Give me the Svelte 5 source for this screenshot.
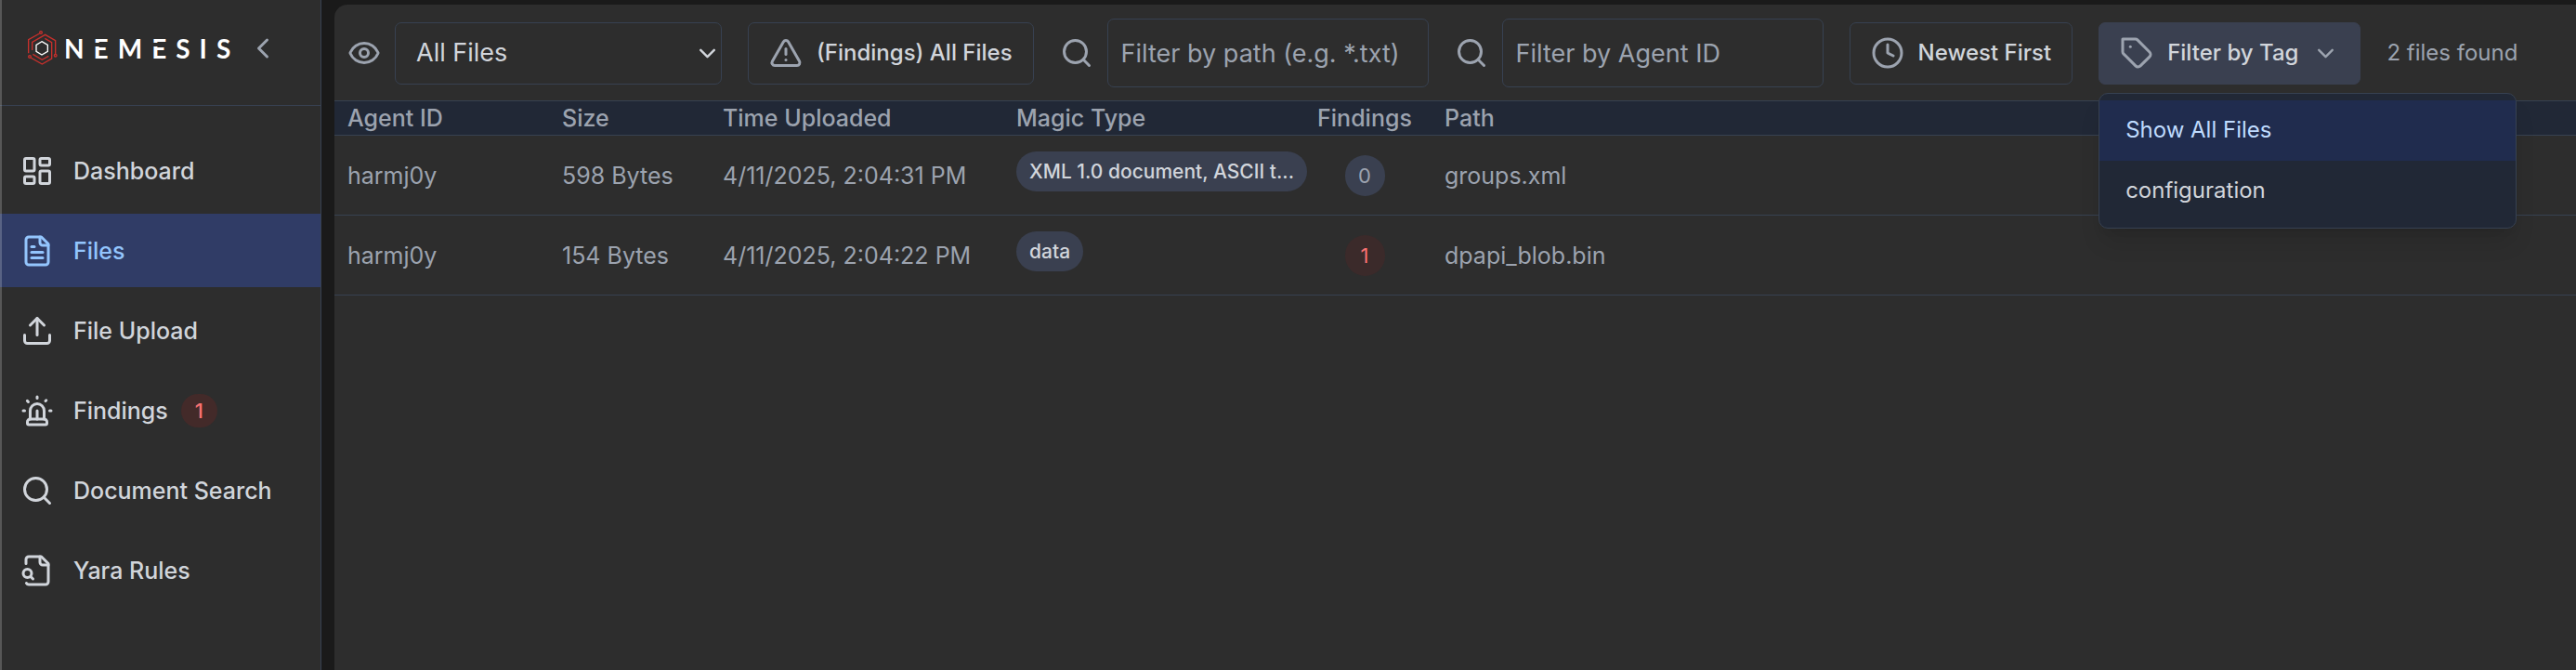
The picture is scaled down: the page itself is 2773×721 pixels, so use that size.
<script>
  const icons = {
    dashboard: ['M4 3h5a1 1 0 0 1 1 1v7a1 1 0 0 1-1 1H4a1 1 0 0 1-1-1V4a1 1 0 0 1 1-1z', 'M15 3h5a1 1 0 0 1 1 1v3a1 1 0 0 1-1 1h-5a1 1 0 0 1-1-1V4a1 1 0 0 1 1-1z', 'M15 12h5a1 1 0 0 1 1 1v7a1 1 0 0 1-1 1h-5a1 1 0 0 1-1-1v-7a1 1 0 0 1 1-1z', 'M4 16h5a1 1 0 0 1 1 1v3a1 1 0 0 1-1 1H4a1 1 0 0 1-1-1v-3a1 1 0 0 1 1-1z'],
    file: ['M15 2H6a2 2 0 0 0-2 2v16a2 2 0 0 0 2 2h12a2 2 0 0 0 2-2V7Z', 'M14 2v4a2 2 0 0 0 2 2h4', 'M10 9H8', 'M16 13H8', 'M16 17H8'],
    upload: ['M21 15v4a2 2 0 0 1-2 2H5a2 2 0 0 1-2-2v-4', 'm17 8-5-5-5 5', 'M12 3v12'],
    siren: ['M7 18v-6a5 5 0 1 1 10 0v6', 'M5 21a1 1 0 0 0 1 1h12a1 1 0 0 0 1-1v-1a2 2 0 0 0-2-2H7a2 2 0 0 0-2 2z', 'M21 12h1', 'M18.5 4.5 18 5', 'M2 12h1', 'M12 2v1', 'm4.929 4.929.707.707', 'M12 12v6'],
    search: ['M11 3a8 8 0 1 0 0 16 8 8 0 0 0 0-16z', 'm21 21-4.3-4.3'],
    fileSearch: ['M14 2v4a2 2 0 0 0 2 2h4', 'M4.268 21a2 2 0 0 0 1.727 1H18a2 2 0 0 0 2-2V7l-5-5H6a2 2 0 0 0-2 2v3', 'm9 18-1.5-1.5', 'M5 11a3 3 0 1 0 0 6 3 3 0 0 0 0-6z'],
    eye: ['M2.062 12.348a1 1 0 0 1 0-.696 10.75 10.75 0 0 1 19.876 0 1 1 0 0 1 0 .696 10.75 10.75 0 0 1-19.876 0', 'M12 9a3 3 0 1 0 0 6 3 3 0 0 0 0-6z'],
    alert: ['m21.73 18-8-14a2 2 0 0 0-3.48 0l-8 14A2 2 0 0 0 4 21h16a2 2 0 0 0 1.73-3', 'M12 9v4', 'M12 17h.01'],
    clock: ['M12 2a10 10 0 1 0 0 20 10 10 0 0 0 0-20z', 'M12 6v6l4 2'],
    tag: ['M12.586 2.586A2 2 0 0 0 11.172 2H2v9.172a2 2 0 0 0 .586 1.414l8.704 8.704a2.426 2.426 0 0 0 3.42 0l6.58-6.58a2.426 2.426 0 0 0 0-3.42z', 'M7.5 7.5h.01'],
    down: ['m6 9 6 6 6-6'],
    left: ['m15 18-6-6 6-6']
  };

  const nav = [
    { label: 'Dashboard', icon: 'dashboard' },
    { label: 'Files', icon: 'file', active: true },
    { label: 'File Upload', icon: 'upload' },
    { label: 'Findings', icon: 'siren', count: 1 },
    { label: 'Document Search', icon: 'search' },
    { label: 'Yara Rules', icon: 'fileSearch' }
  ];

  const files = [
    { agent: 'harmj0y', size: '598 Bytes', time: '4/11/2025, 2:04:31 PM', magic: 'XML 1.0 document, ASCII text', findings: 0, path: 'groups.xml' },
    { agent: 'harmj0y', size: '154 Bytes', time: '4/11/2025, 2:04:22 PM', magic: 'data', findings: 1, path: 'dpapi_blob.bin' }
  ];

  const tags = ['Show All Files', 'configuration'];
  let selected = $state('Show All Files');
  let open = $state(true);

  const shorten = (text, max = 25) => (text.length > max ? text.slice(0, max) + '...' : text);
</script>

{#snippet icon(name)}
  <svg class="icon {name}" viewBox="0 0 24 24" aria-hidden="true">
    {#each icons[name] as d}<path {d} />{/each}
  </svg>
{/snippet}

<div class="app">
  <aside class="sidebar">
    <header class="brand">
      <svg class="mark" viewBox="87 99 99 114" aria-hidden="true">
        <g class="red">
          <path d="M128 108 92 128V172" />
          <circle cx="132" cy="105" r="4" />
          <path d="M104 162V136L146 112 179 131V174" />
          <circle cx="179" cy="179" r="4" />
          <path d="M145 124 167 137V189L136 207 99 186" />
          <circle cx="96" cy="183" r="4" />
          <path d="M106 175 136 193 157 181" />
        </g>
        <path class="core" d="M135 134 154 145V166L135 177 117 166V145Z" />
      </svg>
      <span class="wordmark">N<span class="cut">E</span>M<span class="cut">E</span>SIS</span>
      <button class="collapse" aria-label="Collapse sidebar">{@render icon('left')}</button>
    </header>
    <nav>
      {#each nav as item}
        <a href="#{item.icon}" class:active={item.active}>
          {@render icon(item.icon)}
          <span>{item.label}</span>
          {#if item.count}<span class="count alarm">{item.count}</span>{/if}
        </a>
      {/each}
    </nav>
  </aside>

  <main>
    <div class="toolbar">
      <div class="field">
        {@render icon('eye')}
        <div class="select">
          <select aria-label="File visibility">
            <option>All Files</option>
          </select>
          {@render icon('down')}
        </div>
      </div>
      <button class="btn">{@render icon('alert')}<span>(Findings) All Files</span></button>
      <label class="field">
        {@render icon('search')}
        <input type="text" aria-label="Filter by path" placeholder="Filter by path (e.g. *.txt)" />
      </label>
      <label class="field">
        {@render icon('search')}
        <input type="text" aria-label="Filter by Agent ID" placeholder="Filter by Agent ID" />
      </label>
      <button class="btn">{@render icon('clock')}<span>Newest First</span></button>
      <div class="tagfilter">
        <button class="btn filled" aria-expanded={open} onclick={() => (open = !open)}>
          {@render icon('tag')}<span>Filter by Tag</span>{@render icon('down')}
        </button>
        {#if open}
          <div class="menu">
            {#each tags as tag}
              <button class:current={tag === selected} onclick={() => (selected = tag)}>{tag}</button>
            {/each}
          </div>
        {/if}
      </div>
      <span class="total">{files.length} files found</span>
    </div>

    <table>
      <thead>
        <tr>
          <th class="agent">Agent ID</th>
          <th class="size">Size</th>
          <th class="time">Time Uploaded</th>
          <th class="magic">Magic Type</th>
          <th class="findings">Findings</th>
          <th class="path">Path</th>
        </tr>
      </thead>
      <tbody>
        {#each files as f}
          <tr>
            <td>{f.agent}</td>
            <td>{f.size}</td>
            <td>{f.time}</td>
            <td class="magic"><span class="pill" title={f.magic}>{shorten(f.magic)}</span></td>
            <td class="findings"><span class="count" class:alarm={f.findings > 0}>{f.findings}</span></td>
            <td class="path">{f.path}</td>
          </tr>
        {/each}
      </tbody>
    </table>
  </main>
</div>

<style>
  :global(body) {
    margin: 0;
    background: #1a1a1a;
  }
  .app {
    display: flex;
    gap: 14px;
    min-height: 100vh;
    font-family: Inter, 'Liberation Sans', sans-serif;
    font-size: 25px;
    line-height: 36px;
    color: #9ca3af;
  }
  .app * {
    box-sizing: border-box;
  }
  button,
  select,
  input {
    font: inherit;
    color: inherit;
    background: none;
    border: 0;
    margin: 0;
    padding: 0;
  }
  .icon {
    width: 36px;
    height: 36px;
    flex: none;
    display: block;
    fill: none;
    stroke: currentColor;
    stroke-width: 2;
    stroke-linecap: round;
    stroke-linejoin: round;
  }

  .sidebar {
    position: relative;
    flex: none;
    width: 346px;
    background: #2d2d2d;
    border-right: 1px solid #374151;
  }
  .sidebar::after {
    content: '';
    position: absolute;
    inset: 0 auto 0 0;
    width: 2px;
    background: rgba(255, 255, 255, 0.2);
  }
  .brand {
    display: flex;
    align-items: center;
    padding: 33px 44px 42px 29px;
    border-bottom: 1px solid #374151;
  }
  .mark {
    flex: none;
    width: 33px;
    height: 38px;
    fill: none;
    stroke-width: 4;
  }
  .red {
    stroke: #c8302c;
  }
  .core {
    stroke: #fff;
  }
  .wordmark {
    margin-left: 7px;
    font-family: Lato, sans-serif;
    font-weight: 700;
    font-size: 28px;
    letter-spacing: 10px;
    white-space: nowrap;
    color: #fff;
  }
  .cut {
    position: relative;
  }
  .cut::after {
    content: '';
    position: absolute;
    left: 0;
    top: 11px;
    width: 20px;
    height: 4px;
    background: #2d2d2d;
  }
  .collapse {
    margin-left: auto;
  }
  nav {
    display: flex;
    flex-direction: column;
    gap: 7px;
    padding-top: 30px;
  }
  nav a {
    display: flex;
    align-items: center;
    height: 79px;
    padding-left: 22px;
    gap: 21px;
    font-weight: 500;
    color: #d1d5db;
    text-decoration: none;
  }
  nav a.active {
    background: #303c66;
    color: #93c5fd;
  }
  .count {
    display: inline-block;
    min-width: 43px;
    padding: 4px 0;
    border-radius: 22px;
    background: #3a4050;
    font-size: 22px;
    line-height: 36px;
    text-align: center;
  }
  .count.alarm {
    background: #3b2a2a;
    color: #f87171;
  }
  nav .count {
    min-width: 39px;
    padding: 0;
    margin-left: -7px;
  }
  nav .count.alarm {
    background: #432a29;
  }

  main {
    flex: 1;
    min-width: 0;
    margin-top: 5px;
    background: #2d2d2d;
    border-top-left-radius: 14px;
  }
  .toolbar {
    display: flex;
    align-items: center;
    gap: 28px;
    padding: 15px 14px 14px;
    font-size: 24px;
  }
  .field {
    display: flex;
    align-items: center;
    gap: 15px;
  }
  .select {
    position: relative;
  }
  select {
    appearance: none;
    display: block;
    width: 352px;
    height: 67px;
    padding: 0 22px;
    border: 1px solid #374151;
    border-radius: 7px;
    font-size: 27px;
    color: #d1d5db;
  }
  .icon.down {
    width: 29px;
    height: 29px;
  }
  .select .icon {
    position: absolute;
    right: 1px;
    top: 19px;
    color: #d1d5db;
    pointer-events: none;
  }
  input {
    width: 346px;
    height: 74px;
    padding: 0 14px;
    border: 1px solid #374151;
    border-radius: 7px;
    font-size: 27px;
    color: #d1d5db;
  }
  input::placeholder {
    color: #9ca3af;
    opacity: 1;
  }
  .btn {
    display: flex;
    align-items: center;
    gap: 15px;
    height: 67px;
    padding: 0 22px;
    border: 1px solid #374151;
    border-radius: 7px;
    font-weight: 500;
    white-space: nowrap;
  }
  .btn span {
    color: #d1d5db;
  }
  .btn.filled {
    background: #3a4050;
    border-color: #3a4050;
  }
  .tagfilter {
    position: relative;
  }
  .menu {
    position: absolute;
    top: 76px;
    left: 0;
    width: 450px;
    padding: 7px 0;
    background: #212836;
    border: 1px solid #374151;
    border-radius: 10px;
    box-shadow: 0 18px 27px -5px rgba(0, 0, 0, 0.12), 0 7px 11px -7px rgba(0, 0, 0, 0.1);
    z-index: 1;
  }
  .menu button {
    display: block;
    width: 100%;
    height: 65px;
    padding: 0 28px;
    text-align: left;
    color: #d1d5db;
  }
  .menu button.current {
    background: #202c4e;
    color: #bfdbfe;
  }

  table {
    width: 100%;
    table-layout: fixed;
    border-collapse: separate;
    border-spacing: 0;
  }
  th,
  td {
    padding: 0 0 0 14px;
    text-align: left;
    white-space: nowrap;
    border-bottom: 1px solid #374151;
  }
  th {
    font-weight: 500;
    background: #212836;
    border-top: 1px solid #374151;
  }
  td {
    height: 86px;
  }
  .agent {
    width: 231px;
  }
  .size {
    width: 173px;
  }
  .time {
    width: 316px;
  }
  .magic {
    width: 331px;
  }
  .findings {
    width: 116px;
    padding: 0;
    text-align: center;
  }
  .path {
    padding-left: 28px;
  }
  td.magic {
    padding-bottom: 8px;
  }
  .pill {
    display: block;
    width: fit-content;
    height: 43px;
    padding: 0 14px;
    border-radius: 22px;
    background: #3a4050;
    color: #d1d5db;
    font-size: 21px;
    font-weight: 500;
    line-height: 43px;
  }
</style>
